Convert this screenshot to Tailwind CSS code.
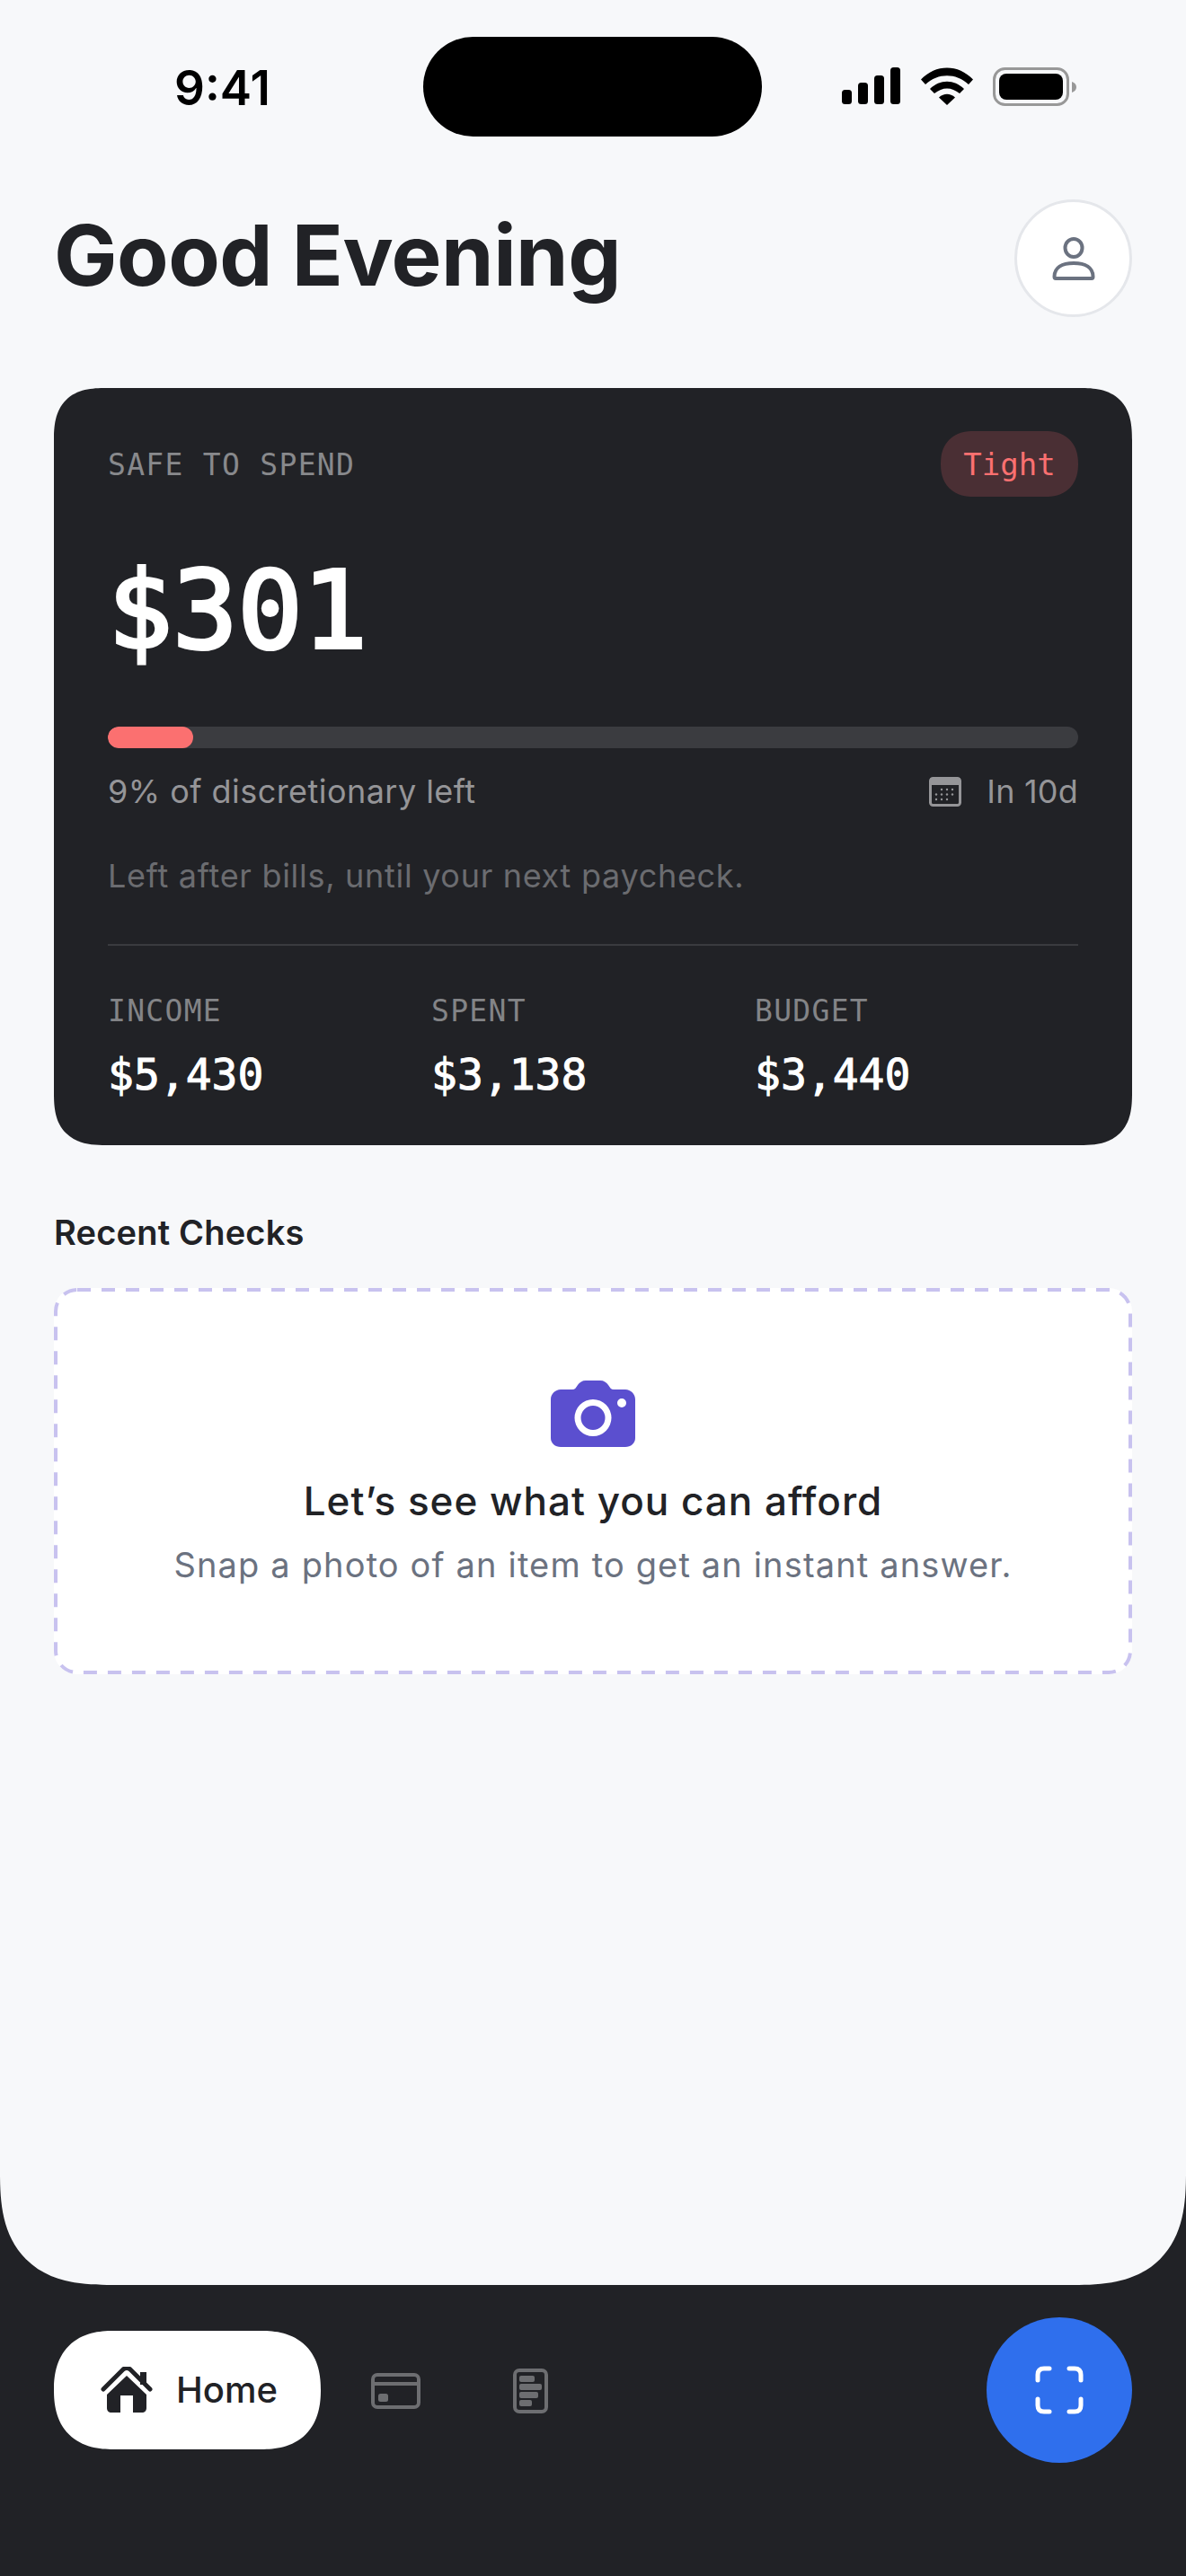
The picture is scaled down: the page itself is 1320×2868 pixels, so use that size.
<!doctype html>
<html lang="en">
<head>
<meta charset="utf-8">
<title>Good Evening</title>
<script src="https://cdn.jsdelivr.net/npm/@tailwindcss/browser@4"></script>
</head>
<body class="m-0 bg-[#212226]">
<div class="flex h-[2868px] w-[1320px] flex-col overflow-hidden bg-[#212226] font-['Inter',sans-serif]">
  <main class="flex h-[2544px] flex-col rounded-b-[125px] bg-[#f7f8fa] px-[60px] [corner-shape:superellipse(1.4)]">
    <!-- status bar -->
    <div class="flex h-[152px] shrink-0 items-start pt-[41px]">
      <div class="flex h-[111px] w-[411px] items-center pt-[5px] pl-[134px] text-[53px] font-semibold text-black">9:41</div>
      <div class="h-[111px] w-[377px] rounded-[56px] bg-black"></div>
      <div class="flex flex-1 items-start pl-[89px] pt-[34px]">
        <svg class="block" width="66" height="42" viewBox="0 0 66 42" fill="#000"><rect x="0" y="25" width="11" height="16" rx="3.500"/><rect x="18" y="17" width="11" height="24" rx="3.500"/><rect x="36" y="9" width="11" height="32" rx="3.500"/><rect x="54" y="0" width="11" height="41" rx="3.500"/></svg>
        <svg class="ml-[22px] block" width="58" height="42" viewBox="0 0 58 42" fill="#000"><path d="M0 13.500 C16 -4 42 -4 58 13.500 L53 19 C39 6 19 6 5 19 Z"/><path d="M10 24 C21 13 37 13 48 24 L43 29 C34 21.500 24 21.500 15 29 Z"/><path d="M20 33.500 C25.500 28.500 32.500 28.500 38 33.500 L29 42 Z"/></svg>
        <svg class="ml-[22px] block" width="94" height="44" viewBox="0 0 94 44"><rect x="1.500" y="1.500" width="82" height="40" rx="12" fill="none" stroke="#989898" stroke-width="3"/><rect x="7" y="7" width="71" height="29" rx="8" fill="#000"/><path d="M88 16 C91 17 93 19 93 22 C93 25 91 27 88 28 Z" fill="#989898"/></svg>
      </div>
    </div>

    <!-- header -->
    <header class="mt-[70px] flex h-[131px] shrink-0 items-center justify-between">
      <h1 class="pb-[8px] text-[94px] leading-none font-bold tracking-[-0.500px] text-[#212226]">Good Evening</h1>
      <button class="flex h-[131px] w-[131px] items-center justify-center rounded-full border-[3px] border-[#e5e7eb] bg-white">
        <svg width="52" height="52" viewBox="0 0 52 52" fill="none" stroke="#6b7280" stroke-width="4"><ellipse cx="26" cy="14" rx="9.500" ry="10"/><path d="M4.500 46 C4.500 36 13 31 26 31 C39 31 47.500 36 47.500 46 C47.500 47.500 47 48 46 48 L6 48 C5 48 4.500 47.500 4.500 46 Z" stroke-linejoin="round"/></svg>
      </button>
    </header>

    <!-- summary card -->
    <section class="mt-[79px] h-[843px] shrink-0 rounded-[58px] bg-[#212226] px-[60px] pt-[48px] [corner-shape:superellipse(1.4)]">
      <div class="flex h-[73px] items-center justify-between">
        <span class="pt-[2px] font-['DejaVu_Sans_Mono',monospace] text-[33px] tracking-[1.300px] text-[#88898c]">SAFE TO SPEND</span>
        <span class="flex h-[73px] w-[153px] items-center justify-center rounded-full bg-[#4a2f34] pt-[2px] font-['DejaVu_Sans_Mono',monospace] text-[34px] text-[#fb7070] [corner-shape:superellipse(1.2)]">Tight</span>
      </div>
      <div class="mt-[60px] h-[134px] font-['DejaVu_Sans_Mono',monospace] text-[120px] leading-[134px] text-white [-webkit-text-stroke:4px_#fff]">$301</div>
      <div class="mt-[62px] h-[24px] overflow-hidden rounded-full bg-[#3b3c40]"><div class="h-full w-[95px] rounded-full bg-[#fb7070]"></div></div>
      <div class="mt-[26px] flex h-[44px] items-center justify-between text-[36px] tracking-[0.450px] text-[#959598]">
        <span>9% of discretionary left</span>
        <span class="flex items-center tracking-[0.200px]">
          <svg class="mr-[28px]" width="36" height="33" viewBox="0 0 36 33"><rect x="1.500" y="1.500" width="33" height="30" rx="3" fill="none" stroke="#959598" stroke-width="3"/><rect x="1" y="1" width="34" height="8" rx="2" fill="#959598"/><g fill="#959598"><circle cx="14" cy="14" r="1.200"/><circle cx="20" cy="14" r="1.200"/><circle cx="26" cy="14" r="1.200"/><circle cx="8" cy="19.500" r="1.200"/><circle cx="14" cy="19.500" r="1.200"/><circle cx="20" cy="19.500" r="1.200"/><circle cx="26" cy="19.500" r="1.200"/><circle cx="8" cy="25" r="1.200"/><circle cx="14" cy="25" r="1.200"/><circle cx="20" cy="25" r="1.200"/></g></svg>
          In 10d
        </span>
      </div>
      <p class="mt-[50px] text-[36px] leading-[44px] tracking-[0.700px] text-[#6b6c70]">Left after bills, until your next paycheck.</p>
      <div class="mt-[54px] h-[2px] bg-[#3a3b3f]"></div>
      <div class="mt-[53px] grid grid-cols-3">
        <div>
          <div class="font-['DejaVu_Sans_Mono',monospace] text-[33px] leading-[40px] tracking-[1.300px] text-[#838487]">INCOME</div>
          <div class="mt-[22px] font-['DejaVu_Sans_Mono',monospace] text-[48px] leading-[56px] text-white [-webkit-text-stroke:1px_#fff]">$5,430</div>
        </div>
        <div>
          <div class="font-['DejaVu_Sans_Mono',monospace] text-[33px] leading-[40px] tracking-[1.300px] text-[#838487]">SPENT</div>
          <div class="mt-[22px] font-['DejaVu_Sans_Mono',monospace] text-[48px] leading-[56px] text-white [-webkit-text-stroke:1px_#fff]">$3,138</div>
        </div>
        <div>
          <div class="font-['DejaVu_Sans_Mono',monospace] text-[33px] leading-[40px] tracking-[1.300px] text-[#838487]">BUDGET</div>
          <div class="mt-[22px] font-['DejaVu_Sans_Mono',monospace] text-[48px] leading-[56px] text-white [-webkit-text-stroke:1px_#fff]">$3,440</div>
        </div>
      </div>
    </section>

    <!-- recent checks -->
    <h2 class="mt-[74px] h-[46px] shrink-0 text-[38px] leading-[46px] font-semibold tracking-[0.200px] text-[#212226]">Recent Checks</h2>
    <section class="relative mt-[39px] flex h-[430px] shrink-0 flex-col items-center rounded-[26px] bg-white pt-[103px]">
      <svg class="absolute inset-0" width="1200" height="430" viewBox="0 0 1200 430" fill="none"><rect x="2" y="2" width="1196" height="426" rx="24" stroke="#c8c2ef" stroke-width="4" stroke-dasharray="15 12"/></svg>
      <svg class="block" width="94" height="74" viewBox="0 0 94 74"><path fill-rule="evenodd" fill="#5b4fcf" d="M11 10 L24 10 C27 10 28 8 30 5 C32 2 35 0 39 0 L55 0 C59 0 62 2 64 5 C66 8 67 10 70 10 L83 10 C89 10 94 15 94 21 L94 64 C94 70 89 74 83 74 L11 74 C5 74 0 70 0 64 L0 21 C0 15 5 10 11 10 Z M47 21 A20.500 20.500 0 1 0 47 62 A20.500 20.500 0 1 0 47 21 Z M47 28 A13.500 13.500 0 1 1 47 55 A13.500 13.500 0 1 1 47 28 Z M79 20 A5 5 0 1 0 79 30 A5 5 0 1 0 79 20 Z"/></svg>
      <h3 class="mt-[34px] text-[44px] leading-[52px] font-medium tracking-[1px] text-[#212226]">Let’s see what you can afford</h3>
      <p class="mt-[22px] text-[38px] leading-[46px] tracking-[1.150px] text-[#6b7280]">Snap a photo of an item to get an instant answer.</p>
    </section>
  </main>

  <!-- bottom nav -->
  <nav class="flex flex-1 items-start px-[60px] pt-[36px]">
    <div class="mt-[15px] flex h-[132px] w-[297px] items-center rounded-full bg-white pl-[52px] [corner-shape:superellipse(1.25)]">
      <svg width="58" height="52" viewBox="0 0 58 52"><path d="M3 25 L25 3 C27.500 1 30.500 1 33 3 L55 25" fill="none" stroke="#212226" stroke-width="5" stroke-linecap="round"/><rect x="44" y="6" width="7" height="14" fill="#212226"/><path fill-rule="evenodd" fill="#212226" d="M29 10 L51 31 L51 46 C51 49 49 51 46 51 L12 51 C9 51 7 49 7 46 L7 31 Z M22 32 L22 51 L36 51 L36 32 Z"/></svg>
      <span class="ml-[26px] text-[40px] font-medium text-[#212226]">Home</span>
    </div>
    <svg class="mt-[62px] ml-[56px] block" width="55" height="40" viewBox="0 0 55 40" fill="none"><rect x="2" y="2" width="51" height="36" rx="5" stroke="#6d6e71" stroke-width="4"/><path d="M2 12 L53 12" stroke="#6d6e71" stroke-width="4"/><rect x="8" y="23" width="11" height="9" rx="2.500" fill="#6d6e71"/></svg>
    <svg class="mt-[57px] ml-[103px] block" width="39" height="50" viewBox="0 0 39 50" fill="none"><rect x="2" y="2" width="35" height="46" rx="5" stroke="#6d6e71" stroke-width="4"/><g fill="#6d6e71"><rect x="7" y="8" width="17" height="7" rx="2"/><rect x="7" y="17" width="25" height="7" rx="2"/><rect x="7" y="26" width="21" height="7" rx="2"/><rect x="7" y="35" width="14" height="7" rx="2"/></g></svg>
    <button class="ml-auto flex h-[162px] w-[162px] items-center justify-center rounded-full bg-[#2f6fed]">
      <svg width="54" height="54" viewBox="0 0 54 54" fill="none" stroke="#fff" stroke-width="5" stroke-linecap="round"><path d="M3 16 L3 10 C3 5.500 5.500 3 10 3 L16 3"/><path d="M38 3 L44 3 C48.500 3 51 5.500 51 10 L51 16"/><path d="M51 37 L51 44 C51 48.500 48.500 51 44 51 L38 51"/><path d="M16 51 L10 51 C5.500 51 3 48.500 3 44 L3 37"/></svg>
    </button>
  </nav>
</div>
</body>
</html>
